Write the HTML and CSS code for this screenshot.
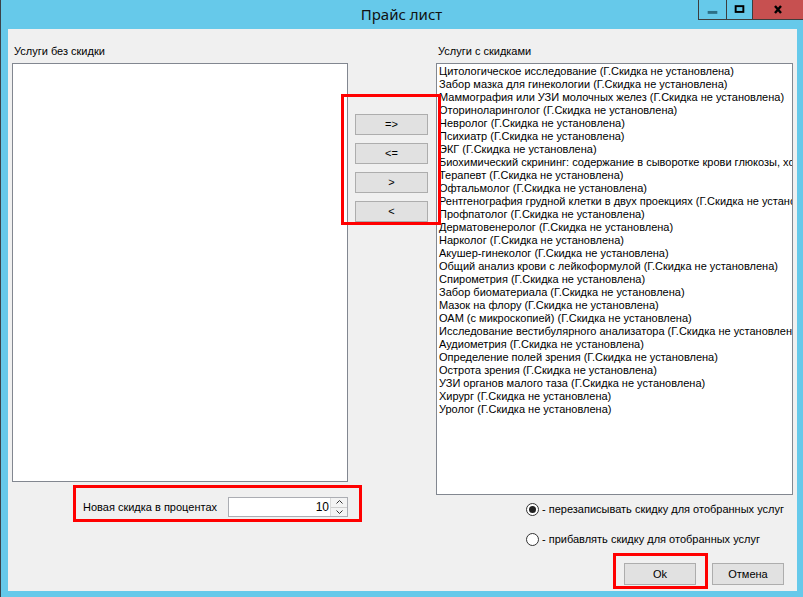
FILE: index.html
```html
<!DOCTYPE html>
<html lang="ru">
<head>
<meta charset="utf-8">
<title>Прайс лист</title>
<link rel="stylesheet" href="styles.css">
</head>
<body>
<div class="window">
  <div class="titlebar">
    <div class="tb-spacer"></div>
    <div class="title">Прайс лист</div>
    <div class="controls">
      <div class="ctl ctl-min"><svg width="28" height="20" viewBox="0 0 28 20"><rect x="9" y="11" width="10" height="3" fill="#2c6f86"/></svg></div>
      <div class="ctl ctl-max"><svg width="26" height="20" viewBox="0 0 26 20"><rect x="9" y="6" width="8" height="6" fill="none" stroke="#000" stroke-width="2"/></svg></div>
      <div class="ctl ctl-close"><svg width="50" height="20" viewBox="0 0 50 20"><path d="M22 6 L28 13 M28 6 L22 13" stroke="#000" stroke-width="2.4" fill="none"/></svg></div>
    </div>
  </div>
  <div class="frame">
    <div class="client">
      <div class="col col-left">
        <div class="label">Услуги без скидки</div>
        <div class="list list-left"></div>
        <div class="discount">
          <span class="discount-label">Новая скидка в процентах</span>
          <div class="numeric">
            <span class="numeric-value">10</span>
            <div class="spinner">
              <div class="spin spin-up"><svg width="7" height="4" viewBox="0 0 7 4"><path d="M0.5 3.5 L3.5 0.5 L6.5 3.5" fill="none" stroke="#333" stroke-width="1"/></svg></div>
              <div class="spin spin-down"><svg width="7" height="4" viewBox="0 0 7 4"><path d="M0.5 0.5 L3.5 3.5 L6.5 0.5" fill="none" stroke="#333" stroke-width="1"/></svg></div>
            </div>
          </div>
        </div>
      </div>
      <div class="col col-mid">
        <div class="btn move-btn">=&gt;</div>
        <div class="btn move-btn">&lt;=</div>
        <div class="btn move-btn">&gt;</div>
        <div class="btn move-btn">&lt;</div>
      </div>
      <div class="col col-right">
        <div class="label">Услуги с скидками</div>
        <div class="list list-right">
          <div class="item">Цитологическое исследование (Г.Скидка не установлена)</div>
          <div class="item">Забор мазка для гинекологии (Г.Скидка не установлена)</div>
          <div class="item">Маммография или УЗИ молочных желез (Г.Скидка не установлена)</div>
          <div class="item">Оториноларинголог (Г.Скидка не установлена)</div>
          <div class="item">Невролог (Г.Скидка не установлена)</div>
          <div class="item">Психиатр (Г.Скидка не установлена)</div>
          <div class="item">ЭКГ (Г.Скидка не установлена)</div>
          <div class="item">Биохимический скрининг: содержание в сыворотке крови глюкозы, холестерина (Г.Скидка не установлена)</div>
          <div class="item">Терапевт (Г.Скидка не установлена)</div>
          <div class="item">Офтальмолог (Г.Скидка не установлена)</div>
          <div class="item">Рентгенография грудной клетки в двух проекциях (Г.Скидка не установлена)</div>
          <div class="item">Профпатолог (Г.Скидка не установлена)</div>
          <div class="item">Дерматовенеролог (Г.Скидка не установлена)</div>
          <div class="item">Нарколог (Г.Скидка не установлена)</div>
          <div class="item">Акушер-гинеколог (Г.Скидка не установлена)</div>
          <div class="item">Общий анализ крови с лейкоформулой (Г.Скидка не установлена)</div>
          <div class="item">Спирометрия (Г.Скидка не установлена)</div>
          <div class="item">Забор биоматериала (Г.Скидка не установлена)</div>
          <div class="item">Мазок на флору (Г.Скидка не установлена)</div>
          <div class="item">ОАМ (с микроскопией) (Г.Скидка не установлена)</div>
          <div class="item">Исследование вестибулярного анализатора (Г.Скидка не установлена)</div>
          <div class="item">Аудиометрия (Г.Скидка не установлена)</div>
          <div class="item">Определение полей зрения (Г.Скидка не установлена)</div>
          <div class="item">Острота зрения (Г.Скидка не установлена)</div>
          <div class="item">УЗИ органов малого таза (Г.Скидка не установлена)</div>
          <div class="item">Хирург (Г.Скидка не установлена)</div>
          <div class="item">Уролог (Г.Скидка не установлена)</div>
        </div>
        <div class="radio-row radio-first">
          <span class="radio checked"></span>
          <span class="radio-text">- перезаписывать скидку для отобранных услуг</span>
        </div>
        <div class="radio-row radio-second">
          <span class="radio"></span>
          <span class="radio-text">- прибавлять скидку для отобранных услуг</span>
        </div>
        <div class="actions">
          <div class="btn action-btn">Ok</div>
          <div class="btn action-btn">Отмена</div>
        </div>
      </div>
      <div class="mark mark-moves"></div>
      <div class="mark mark-discount"></div>
      <div class="mark mark-ok"></div>
    </div>
  </div>
</div>
</body>
</html>
```

FILE: styles.css
```css
html, body {
  margin: 0;
  padding: 0;
}
body {
  width: 803px;
  height: 597px;
  overflow: hidden;
  font-family: "Liberation Sans", Arial, sans-serif;
  font-size: 11px;
  color: #000;
}
.window {
  width: 802px;
  height: 597px;
  background: #66c9ea;
  border-left: 1px solid #3b4249;
  display: flex;
  flex-direction: column;
}
.titlebar {
  height: 29px;
  display: grid;
  grid-template-columns: 104px 1fr 105px;
  align-items: start;
}
.title {
  text-align: center;
  font-family: "Noto Sans", "Open Sans", sans-serif;
  font-size: 15px;
  line-height: 29px;
  color: #111;
}
.controls {
  display: flex;
  height: 20px;
}
.ctl {
  height: 20px;
  border-bottom: 1px solid #3d3d3d;
  border-left: 1px solid #3d3d3d;
  box-sizing: border-box;
  display: flex;
}
.ctl-min { width: 28px; }
.ctl-max { width: 26px; }
.ctl-close { width: 51px; background: #c75050; }
.frame {
  flex: 1;
  padding: 0 6px 6px 7px;
  display: flex;
}
.client {
  flex: 1;
  background: #f0f0f0;
  display: flex;
  position: relative;
}
.col {
  display: flex;
  flex-direction: column;
}
.col-left {
  margin-left: 4px;
  width: 336px;
}
.col-mid {
  margin-left: 7px;
  width: 73px;
  padding-top: 85px;
  gap: 8px;
}
.col-right {
  margin-left: 8px;
  width: 357px;
}
.label {
  height: 34px;
  box-sizing: border-box;
  padding: 16px 0 0 2px;
  line-height: 13px;
}
.list {
  background: #fff;
  border: 1px solid #828790;
  box-sizing: border-box;
  overflow: hidden;
}
.list-left { height: 419px; }
.list-right {
  height: 432px;
  padding: 1px 0 0 2px;
}
.item {
  line-height: 13px;
  height: 13px;
  white-space: nowrap;
}
.discount {
  margin-top: 15px;
  display: flex;
  justify-content: flex-end;
  align-items: center;
  gap: 11px;
}
.discount-label {
  line-height: 13px;
}
.numeric {
  width: 120px;
  height: 20px;
  box-sizing: border-box;
  border: 1px solid #abadb3;
  background: #fff;
  display: flex;
  align-items: center;
}
.numeric-value {
  flex: 1;
  text-align: right;
  padding-right: 1px;
  font-size: 12px;
  line-height: 18px;
}
.spinner {
  width: 17px;
  height: 18px;
  display: flex;
  flex-direction: column;
  border-left: 1px solid #dadada;
  box-sizing: border-box;
}
.spin {
  flex: 1;
  display: flex;
  align-items: center;
  justify-content: center;
  background: #f3f3f3;
}
.spin-up { border-bottom: 1px solid #cfcfcf; }
.btn {
  background: #e1e1e1;
  border: 1px solid #adadad;
  box-sizing: border-box;
  display: flex;
  align-items: center;
  justify-content: center;
  line-height: 13px;
}
.move-btn {
  height: 21px;
}
.radio-row {
  display: flex;
  align-items: center;
  height: 16px;
  padding-left: 90px;
  gap: 3px;
}
.radio-first { margin-top: 6px; }
.radio-second { margin-top: 14px; }
.radio {
  width: 13px;
  height: 13px;
  box-sizing: border-box;
  border: 1px solid #333;
  border-radius: 50%;
  background: #fff;
  display: flex;
  align-items: center;
  justify-content: center;
}
.radio.checked::after {
  content: "";
  width: 7px;
  height: 7px;
  border-radius: 50%;
  background: #222;
}
.radio-text {
  line-height: 13px;
}
.actions {
  margin-top: 16px;
  display: flex;
  justify-content: flex-end;
  gap: 16px;
  padding-right: 9px;
}
.action-btn {
  width: 72px;
  height: 22px;
}
.mark {
  position: absolute;
  border: 3px solid #ff0000;
  box-sizing: border-box;
  pointer-events: none;
}
.mark-moves {
  left: 333px;
  top: 65px;
  width: 100px;
  height: 131px;
}
.mark-discount {
  left: 65px;
  top: 456px;
  width: 289px;
  height: 37px;
}
.mark-ok {
  left: 605px;
  top: 524px;
  width: 95px;
  height: 36px;
}
```
